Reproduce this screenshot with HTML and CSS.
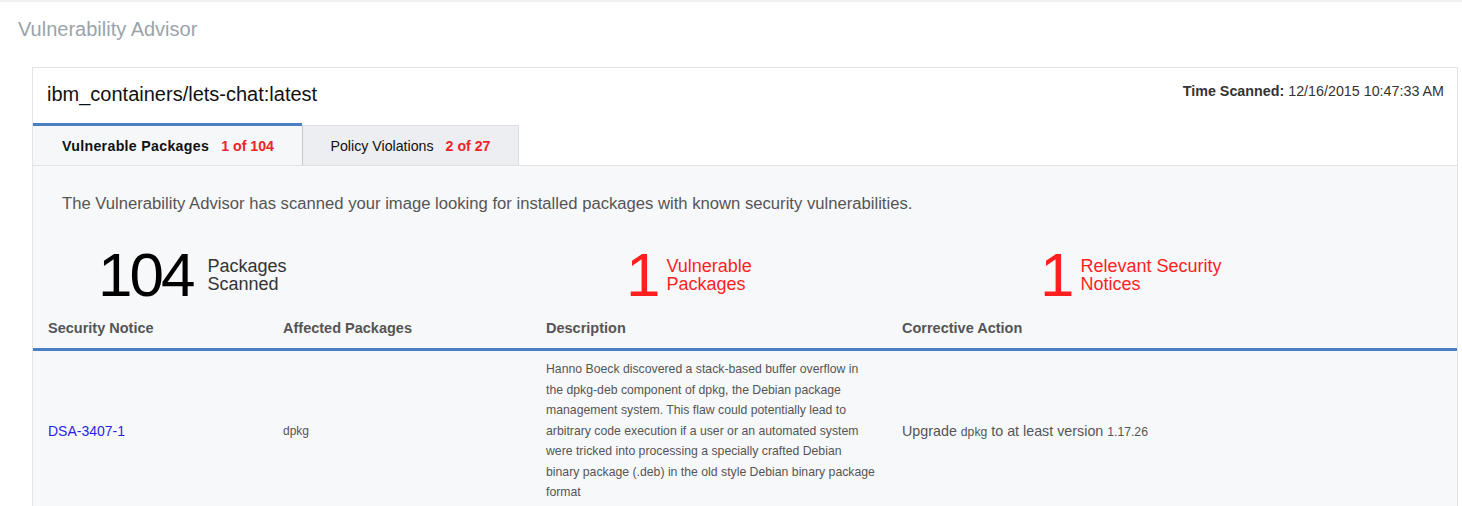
FILE: index.html
```html
<!DOCTYPE html>
<html>
<head>
<meta charset="utf-8">
<link rel="stylesheet" href="styles.css">
</head>
<body>
<div class="page">
  <h1 class="page-title">Vulnerability Advisor</h1>
  <div class="card">
    <div class="card-header">
      <div class="image-name">ibm_containers/lets-chat:latest</div>
      <div class="scan-time"><b>Time Scanned:</b> 12/16/2015 10:47:33 AM</div>
    </div>
    <div class="tabs">
      <div class="tab tab-active"><b>Vulnerable Packages</b><span class="count">1 of 104</span></div>
      <div class="tab tab-inactive">Policy Violations<span class="count">2 of 27</span></div>
    </div>
    <div class="content">
      <p class="intro">The Vulnerability Advisor has scanned your image looking for installed packages with known security vulnerabilities.</p>
      <div class="stats">
        <div class="stat stat-1">
          <span class="stat-num">104</span>
          <span class="stat-label">Packages<br>Scanned</span>
        </div>
        <div class="stat stat-2 red">
          <span class="stat-num">1</span>
          <span class="stat-label">Vulnerable<br>Packages</span>
        </div>
        <div class="stat stat-3 red">
          <span class="stat-num">1</span>
          <span class="stat-label">Relevant Security<br>Notices</span>
        </div>
      </div>
      <table class="notices">
        <colgroup>
          <col class="c1"><col class="c2"><col class="c3"><col class="c4">
        </colgroup>
        <thead>
          <tr>
            <th>Security Notice</th>
            <th>Affected Packages</th>
            <th>Description</th>
            <th>Corrective Action</th>
          </tr>
        </thead>
        <tbody>
          <tr>
            <td><a class="notice-link" href="#">DSA-3407-1</a></td>
            <td class="pkg">dpkg</td>
            <td class="desc">Hanno Boeck discovered a stack-based buffer overflow in the dpkg-deb component of dpkg, the Debian package management system. This flaw could potentially lead to arbitrary code execution if a user or an automated system were tricked into processing a specially crafted Debian binary package (.deb) in the old style Debian binary package format</td>
            <td class="action">Upgrade <span class="small">dpkg</span> to at least version <span class="small">1.17.26</span></td>
          </tr>
        </tbody>
      </table>
    </div>
  </div>
</div>
</body>
</html>
```

FILE: styles.css
```css
html, body {
  margin: 0;
  padding: 0;
  background: #ffffff;
}

body {
  font-family: "Liberation Sans", Arial, sans-serif;
  color: #222;
  overflow: hidden;
}

.page {
  border-top: 2px solid #f0f0f0;
}

.page-title {
  margin: 15px 0 0 18px;
  font-size: 20px;
  line-height: 24px;
  font-weight: normal;
  color: #9aa3ab;
}

.card {
  margin: 26px 4px 0 32px;
  border: 1px solid #e4e4e4;
  border-bottom: none;
}

.card-header {
  display: flex;
  justify-content: space-between;
  align-items: flex-start;
  height: 55px;
  padding: 0 13px 0 14px;
}

.image-name {
  margin-top: 14px;
  font-size: 20px;
  line-height: 24px;
  color: #111;
}

.scan-time {
  margin-top: 15px;
  font-size: 14.3px;
  line-height: 17px;
  color: #333;
}

.scan-time b {
  color: #333;
}

.tabs {
  display: flex;
  align-items: flex-start;
  height: 42px;
  border-bottom: 1px solid #e2e2e2;
}

.tab {
  box-sizing: border-box;
  display: flex;
  align-items: center;
  justify-content: center;
  font-size: 14.2px;
  color: #111;
}

.tab b {
  letter-spacing: 0.3px;
}

.tab .count {
  margin-left: 12px;
  font-weight: bold;
  color: #f0222a;
}

.tab-active {
  width: 269px;
  height: 42px;
  border-top: 3px solid #4a7fc1;
  background: #f6f7f9;
  padding-left: 1px;
}

.tab-inactive {
  width: 217px;
  height: 40px;
  margin-top: 2px;
  background: #eceef1;
  border-top: 1px solid #dcdfe3;
  border-right: 1px solid #dcdfe3;
  border-left: 1px solid #c4c6c9;
}

.content {
  background: #f7f8fa;
  padding-bottom: 20px;
}

.intro {
  margin: 0;
  padding: 28px 20px 0 29px;
  font-size: 16.65px;
  line-height: 20px;
  color: #555;
}

.stats {
  display: flex;
  margin-top: 30px;
  margin-bottom: 2px;
  padding-left: 65px;
}

.stat {
  display: flex;
  align-items: center;
}

.stat-1 { width: 528px; }
.stat-2 { width: 414px; }

.stat-num {
  font-size: 62px;
  line-height: 62px;
  letter-spacing: -3px;
  color: #000;
}

.stat-label {
  margin-left: 15px;
  font-size: 18px;
  line-height: 18px;
  color: #333;
}

.red .stat-label {
  margin-left: 9px;
}

.red .stat-num,
.red .stat-label {
  color: #ff1f1f;
}

.notices {
  width: 100%;
  border-collapse: collapse;
  table-layout: fixed;
}

.c1 { width: 235px; }
.c2 { width: 263px; }
.c3 { width: 356px; }

.notices th {
  text-align: left;
  padding: 12px 14px 12px 15px;
  font-size: 14.5px;
  line-height: 16px;
  font-weight: bold;
  color: #555;
  border-bottom: 3px solid #4a7fc1;
}

.notices td {
  padding: 8px 14px 8px 15px;
  vertical-align: middle;
  color: #555;
}

.notice-link {
  font-size: 14px;
  color: #2a1fe6;
  text-decoration: none;
}

.pkg {
  font-size: 12px;
}

.notices td.desc {
  padding-right: 11px;
  font-size: 12.25px;
  line-height: 20.5px;
}

.action {
  font-size: 14.3px;
}

.action .small {
  font-size: 12.2px;
}
```
